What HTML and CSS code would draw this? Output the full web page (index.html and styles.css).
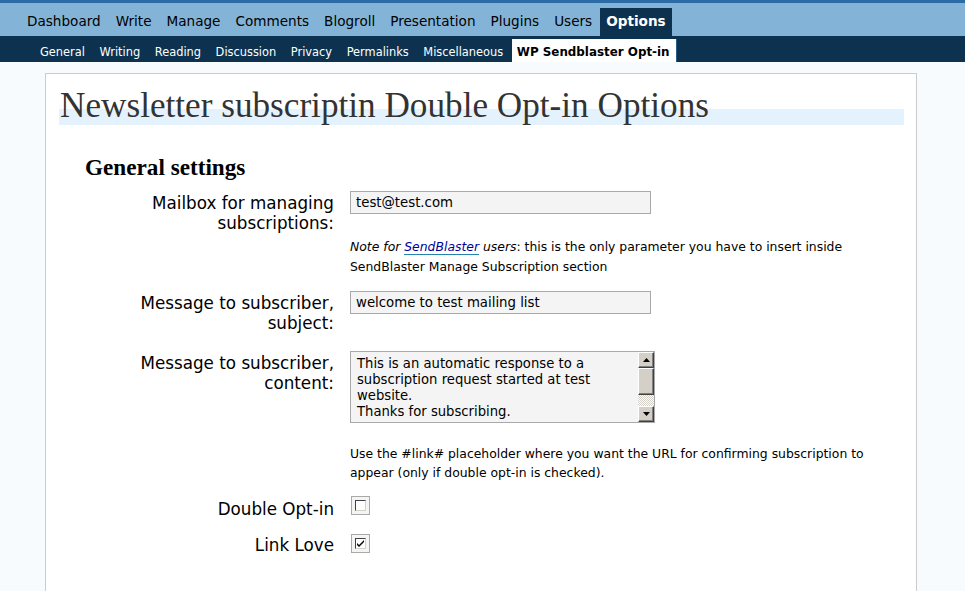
FILE: index.html
```html
<!DOCTYPE html>
<html>
<head>
<meta charset="utf-8">
<link rel="stylesheet" href="styles.css">
</head>
<body>
<div class="top-strip"></div>
<nav class="adminmenu">
  <a>Dashboard</a><a>Write</a><a>Manage</a><a>Comments</a><a>Blogroll</a><a>Presentation</a><a>Plugins</a><a>Users</a><a class="current">Options</a>
</nav>
<nav class="submenu">
  <a>General</a><a>Writing</a><a>Reading</a><a>Discussion</a><a>Privacy</a><a>Permalinks</a><a>Miscellaneous</a><a class="current">WP Sendblaster Opt-in</a>
</nav>
<div class="wrap">
  <h2>Newsletter subscriptin Double Opt-in Options</h2>
  <h3>General settings</h3>
  <div class="form">
    <div class="row r1">
      <label class="lbl">Mailbox for managing subscriptions:</label>
      <div class="field">
        <input class="text" type="text" value="test@test.com">
        <p class="note"><em>Note for <a class="link">SendBlaster</a> users</em>: this is the only parameter you have to insert inside SendBlaster Manage Subscription section</p>
      </div>
    </div>
    <div class="row r2">
      <label class="lbl">Message to subscriber, subject:</label>
      <div class="field">
        <input class="text" type="text" value="welcome to test mailing list">
      </div>
    </div>
    <div class="row r3">
      <label class="lbl">Message to subscriber, content:</label>
      <div class="field">
        <div class="ta">
          <textarea class="ta-text">This is an automatic response to a subscription request started at test website.
Thanks for subscribing.</textarea>
          <div class="sb">
            <div class="sb-btn"><svg width="7" height="4" viewBox="0 0 7 4"><path d="M3.5 0 L7 4 L0 4 Z" fill="#000"/></svg></div>
            <div class="sb-thumb"></div>
            <div class="sb-track"></div>
            <div class="sb-btn"><svg width="7" height="4" viewBox="0 0 7 4"><path d="M0 0 L7 0 L3.5 4 Z" fill="#000"/></svg></div>
          </div>
        </div>
        <p class="hint">Use the #link# placeholder where you want the URL for confirming subscription to appear (only if double opt-in is checked).</p>
      </div>
    </div>
    <div class="row r4">
      <label class="lbl">Double Opt-in</label>
      <div class="field"><span class="cb"><span class="cb-in"></span></span></div>
    </div>
    <div class="row r5">
      <label class="lbl">Link Love</label>
      <div class="field"><span class="cb"><span class="cb-in"><svg width="9" height="9" viewBox="0 0 9 9"><path d="M1 4 L3 6 L8 1 L8 3 L3 8 L1 6 Z" fill="#000"/></svg></span></span></div>
    </div>
  </div>
</div>
</body>
</html>
```

FILE: styles.css
```css
html, body {
  margin: 0;
  padding: 0;
}
body {
  background: #f7fbfe;
  font-family: "DejaVu Sans", sans-serif;
  color: #000;
  height: 591px;
  overflow: hidden;
}
.top-strip {
  height: 3px;
  background: #2c6ca4;
}
.adminmenu {
  display: flex;
  align-items: flex-end;
  height: 33px;
  background: #83b4d8;
  padding-left: 20px;
}
.adminmenu a {
  font-size: 13.58px;
  line-height: 20px;
  padding: 3px 7px 5px 7px;
  margin-right: 1px;
  color: #000;
}
.adminmenu a.current {
  background: #0d324f;
  color: #fff;
  font-weight: bold;
  padding: 3px 6px 5px 6px;
}
.submenu {
  display: flex;
  align-items: flex-end;
  height: 26px;
  background: #0d324f;
  padding-left: 33px;
}
.submenu a {
  font-size: 11.4px;
  line-height: 20px;
  padding: 3px 7px 0 7px;
  margin-right: 0.6px;
  color: #fff;
}
.submenu a.current {
  background: #fff;
  color: #000;
  font-weight: bold;
  font-size: 11.9px;
  padding: 3px 6px 0 5px;
  margin-left: 1px;
  border-right: 1px solid #2a5f8c;
}
.wrap {
  margin: 11px 48px 0 45px;
  background: #fff;
  border: 1px solid #ccc;
  height: 520px;
}
h2 {
  font-family: "Liberation Serif", serif;
  font-weight: normal;
  font-size: 35.2px;
  line-height: 6px;
  color: #333;
  margin: 29px 12px 0 13px;
  padding-left: 1px;
  border-bottom: 16px solid #e4f2fd;
}
h3 {
  font-family: "Liberation Serif", serif;
  font-weight: bold;
  font-size: 23.2px;
  line-height: 24px;
  margin: 30px 0 0 39px;
  color: #000;
}
.form {
  margin-top: 12px;
  padding-left: 88px;
}
.row {
  display: grid;
  grid-template-columns: 200px 530px;
  column-gap: 16px;
  align-items: start;
}
.lbl {
  text-align: right;
  font-size: 16.75px;
  line-height: 20px;
  padding-top: 2px;
}
.text {
  display: block;
  box-sizing: border-box;
  width: 301px;
  height: 23px;
  margin: 0;
  border: 1px solid #a9a9a9;
  background: #f4f4f4;
  padding: 0 5px;
  font-family: "DejaVu Sans", sans-serif;
  font-size: 13.3px;
  color: #000;
  outline: none;
}
.note, .hint {
  margin: 0;
  font-size: 12.4px;
  line-height: 20px;
  color: #000;
}
.note {
  margin-top: 23px;
}
.note em {
  font-style: oblique;
}
.link {
  color: #00019b;
  border-bottom: 1px solid #2583ad;
}
.r2 { margin-top: 14px; }
.r3 { margin-top: 18px; }
.r4 { margin-top: 14px; }
.r5 { margin-top: 15px; }
.r4 .lbl { padding-top: 3px; }
.r5 .lbl { padding-top: 1px; }
.ta {
  display: flex;
  width: 305px;
  height: 72px;
  box-sizing: border-box;
  border: 1px solid #a9a9a9;
  background: #f4f4f4;
}
.ta-text {
  flex: 1;
  margin: 0;
  border: 0;
  background: transparent;
  resize: none;
  overflow: hidden;
  padding: 4px 4px 0 6px;
  font-family: "DejaVu Sans", sans-serif;
  font-size: 13.2px;
  line-height: 16px;
  color: #000;
  outline: none;
}
.sb {
  width: 16px;
  display: flex;
  flex-direction: column;
  background: #fff;
}
.sb-btn, .sb-thumb {
  box-sizing: border-box;
  background: #d4d0c8;
  border: 1px solid;
  border-color: #fff #404040 #404040 #fff;
  box-shadow: inset -1px -1px 0 #808080;
  display: flex;
  align-items: center;
  justify-content: center;
}
.sb-btn {
  height: 16px;
}
.sb-thumb {
  height: 27px;
}
.sb-track {
  flex: 1;
  background-color: #f0efec;
  background-image: repeating-conic-gradient(#d4d0c8 0 25%, #fff 0 50%);
  background-size: 2px 2px;
}
.hint {
  margin-top: 21px;
  line-height: 19px;
}
.cb {
  display: flex;
  align-items: center;
  justify-content: center;
  width: 19px;
  height: 19px;
  box-sizing: border-box;
  margin-left: 1px;
  border: 1px solid #a9a9a9;
  background: #f4f4f4;
}
.cb-in {
  display: flex;
  align-items: center;
  justify-content: center;
  width: 11px;
  height: 11px;
  box-sizing: border-box;
  border: 1px solid;
  border-color: #404040 #d4d0c8 #d4d0c8 #404040;
  background: #fff;
}
```
